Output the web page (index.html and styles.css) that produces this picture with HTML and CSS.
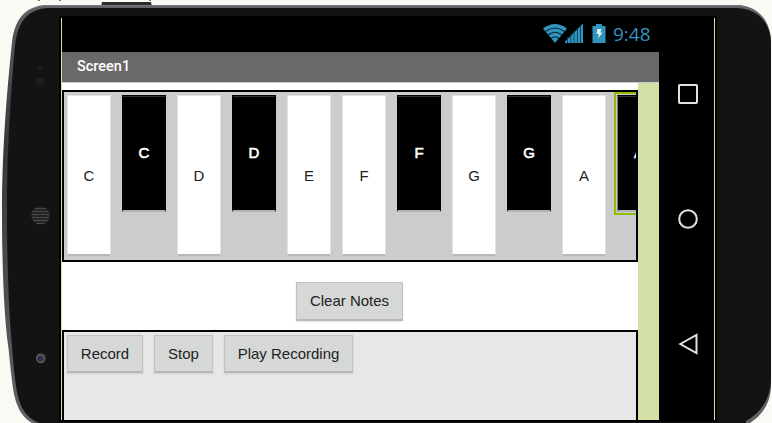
FILE: index.html
```html
<!DOCTYPE html>
<html lang="en">
<head>
<meta charset="utf-8">
<title>Screen1</title>
<link rel="stylesheet" href="styles.css">
</head>
<body>
<div class="phone">
  <svg class="shell" viewBox="0 0 772 423" aria-hidden="true">
    <defs>
      <linearGradient id="rim" x1="0" y1="0" x2="0" y2="1">
        <stop offset="0" stop-color="#66676b"/><stop offset=".05" stop-color="#55565a"/><stop offset=".35" stop-color="#37383a"/><stop offset="1" stop-color="#626366"/>
      </linearGradient>
      <radialGradient id="lens" cx=".4" cy=".55"><stop offset="0" stop-color="#303088"/><stop offset=".4" stop-color="#2c2c3c"/><stop offset=".7" stop-color="#66666a"/><stop offset="1" stop-color="#1c1c1e"/></radialGradient>
      <pattern id="mesh" width="4" height="3" patternUnits="userSpaceOnUse"><rect width="4" height="3" fill="#1d1d1d"/><path d="M0 2L2 1L4 2" fill="none" stroke="#5c5c5c" stroke-width=".9"/></pattern>
    </defs>
    <path d="M38 0h2v1h-2zM59 0h2v1h-2zM149 0h2v1h-2z" fill="#777"/>
    <path d="M102 2h49l1 5h-51z" fill="#2c2d30"/>
    <path d="M46 5H738C759 6 771 22 771 42V385C771 402 763 415 750 423V427H36V425C24 420 18 410 15 398C12 388 9 350 8 345C4 315 2 265 2 212C2 150 7 90 12 42C15 17 27 6 46 5Z" fill="url(#rim)"/>
    <path d="M48 8H736C757 8 771 23 771 43V378C771 398 761 413 746 421V427H44V425C28 420 21 410 18 396C15 385 12 350 12 345C9 315 7 265 7 212C7 150 11 90 15 45C18 20 29 9 48 8Z" fill="#131313"/>
    <path d="M45 5.5H742" stroke="#77787b" fill="none"/>
    <circle cx="40.5" cy="215.500" r="9.3" fill="url(#mesh)"/>
    <circle cx="40" cy="68" r="2.500" fill="#1d1d1d"/>
    <circle cx="40" cy="81.500" r="4" fill="#1f1f1f"/>
    <circle cx="41.500" cy="358" r="5.500" fill="url(#lens)"/>
  </svg>

  <div class="display">
    <div class="app">
      <div class="status">
        <svg class="status-icons" viewBox="0 0 64 22" aria-hidden="true">
          <path d="M0 5.500Q12 -3.500 24 5.500L12 20Z" fill="#3294bf"/>
          <path d="M2.500 8.500Q12 1.500 21.500 8.500M5.200 12Q12 6.500 18.800 12M8 15.500Q12 12 16 15.500" fill="none" stroke="#05202c" stroke-width="1.100"/>
          <path d="M22 20v-1.500L40 .5V20z" fill="#3294bf"/>
          <path d="M24.500 14v6M27.800 11v9M31 8v12M34.400 5v15M37.500 2.500v17.500" stroke="#0a4055" stroke-width=".9"/>
          <path d="M53 1h6v2h3.500v17h-13V3H53z" fill="#3294bf"/>
          <path d="M54.500 6h4l-1.300 3.500h2.300l-4.500 6 1-4.500h-2.500z" fill="#e4f4fc"/>
        </svg>
        <span class="clock">9:48</span>
      </div>
      <div class="titlebar">Screen1</div>
      <div class="workspace">
        <div class="canvas">
          <div class="piano">
            <div class="key white">C</div>
            <div class="key black">C</div>
            <div class="key white">D</div>
            <div class="key black">D</div>
            <div class="key white">E</div>
            <div class="key white">F</div>
            <div class="key black">F</div>
            <div class="key white">G</div>
            <div class="key black">G</div>
            <div class="key white">A</div>
            <div class="key black selected">A</div>
          </div>
          <div class="clear-row"><button class="btn clear">Clear Notes</button></div>
          <div class="recorder">
            <button class="btn record">Record</button>
            <button class="btn stop">Stop</button>
            <button class="btn play">Play Recording</button>
          </div>
        </div>
      </div>
    </div>
    <div class="nav">
      <svg viewBox="0 0 22 22"><rect x="2" y="2" width="18" height="18" rx=".8"/></svg>
      <svg viewBox="0 0 22 22"><circle cx="11" cy="11" r="8.800"/></svg>
      <svg viewBox="0 0 22 22"><path d="M3.300 11L19.500 2V20Z"/></svg>
    </div>
  </div>
</div>
</body>
</html>
```
FILE: styles.css
```css
* { box-sizing: border-box; }

body {
  margin: 0;
  background: #f9faf4;
  font-family: "Liberation Sans", Arial, sans-serif;
}

.phone {
  position: relative;
  width: 772px;
  height: 423px;
  padding: 16px 55px 1px 59px;
  overflow: hidden;
}

.shell {
  position: absolute;
  inset: 0;
  width: 772px;
  height: 423px;
}

.display {
  position: relative;
  display: flex;
  width: 658px;
  height: 406px;
  padding: 2px;
  background: #000;
}

.app {
  display: flex;
  flex-direction: column;
  width: 598px;
  border-left: 1px solid #d2e0a6;
}

.status {
  display: flex;
  justify-content: flex-end;
  height: 34px;
  padding-right: 8px;
  background: #000;
}

.status-icons {
  width: 64px;
  height: 22px;
  margin: 5px 6px 0 0;
}

.clock {
  width: 38px;
  color: #3294bf;
  font: 19px/32px "Open Sans", "Noto Sans", sans-serif;
  white-space: nowrap;
}

.titlebar {
  height: 31px;
  padding-left: 15px;
  border-bottom: 1px solid #ccc;
  background: #696969;
  color: #fff;
  font: 500 14.5px/29px Roboto, sans-serif;
}

.workspace {
  flex: 1;
  background: #d2e0a6;
}

.canvas {
  width: 576px;
  height: 337px;
  padding-top: 7px;
  background: #fff;
}

.piano {
  display: flex;
  align-items: flex-start;
  gap: 11px;
  height: 172px;
  padding: 3px;
  border: 2px solid #000;
  background: #ccc;
  overflow: hidden;
}

.key {
  flex: 0 0 44px;
  font-size: 15px;
  text-align: center;
}

.white {
  height: 161px;
  border: 1px solid #e2e2e2;
  border-bottom: 2px solid #b8b8b8;
  background: #fff;
  color: #222;
  line-height: 160px;
}

.black {
  height: 117px;
  border: 1px solid #000;
  border-bottom: 2px solid #b3b3b3;
  background: #000;
  box-shadow: inset 0 1px #333;
  color: #fff;
  line-height: 114px;
  -webkit-text-stroke: .6px #fff;
}

.selected {
  border-left-color: #777;
  outline: 2px solid #8fbd00;
  outline-offset: 1px;
}

.clear-row {
  display: flex;
  justify-content: center;
  height: 68px;
  padding: 20px 1px 0 0;
}

.recorder {
  display: flex;
  align-items: flex-start;
  gap: 11px;
  height: 90px;
  padding: 3px;
  border: 2px solid #000;
  border-bottom: 0;
  background: #e7e7e7;
}

.btn {
  height: 38px;
  padding: 1px 0 0;
  border: 1px solid #c0c2c2;
  border-bottom: 2px solid #b7b8b8;
  border-radius: 0;
  background: #d6d8d7;
  box-shadow: 0 1px 2px rgba(0, 0, 0, .1);
  color: #222;
  font: 15px/34px "Liberation Sans", Arial, sans-serif;
  white-space: nowrap;
}

.clear { width: 107px; height: 39px; padding: 0 0 1px; }
.record { width: 76px; }
.stop { width: 59px; }
.play { width: 129px; }

.nav {
  display: flex;
  flex-direction: column;
  align-items: center;
  gap: 103px;
  width: 56px;
  padding: 65px 0 0 2px;
  border-right: 1px solid #d2e0a6;
}

.nav svg {
  flex: 0 0 22px;
  width: 22px;
  height: 22px;
  fill: none;
  stroke: #e2e2e2;
  stroke-width: 2;
}
```
